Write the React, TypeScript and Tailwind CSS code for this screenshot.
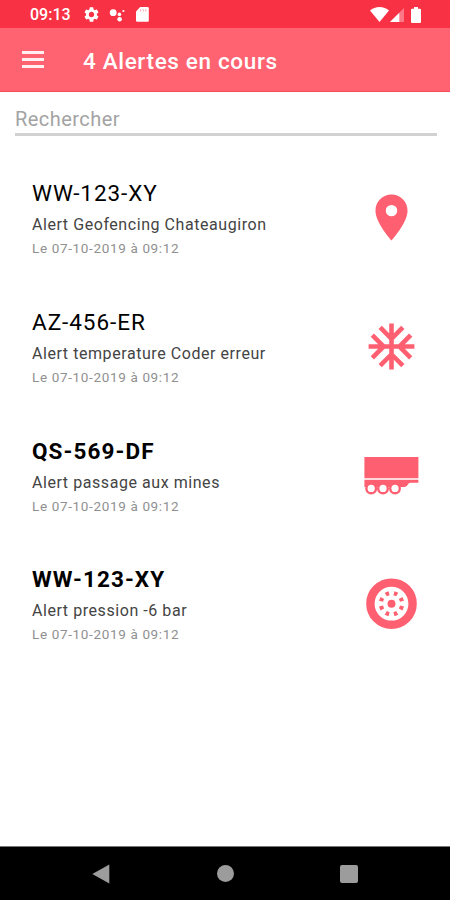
import React from 'react';

interface Alert {
  plate: string;
  message: string;
  date: string;
  unread: boolean;
  icon: React.ReactNode;
}

const PinIcon = () => (
  <svg viewBox="0 0 24 24" className="w-[55px] h-[55px]" fill="currentColor">
    <path d="M12 2C8.13 2 5 5.13 5 9c0 5.25 7 13 7 13s7-7.75 7-13c0-3.87-3.13-7-7-7zm0 9.5a2.5 2.5 0 0 1 0-5 2.5 2.5 0 0 1 0 5z" />
  </svg>
);

const SnowIcon = () => (
  <svg viewBox="0 0 24 24" className="w-[55px] h-[55px]" fill="currentColor">
    <path d="M22 11h-4.17l3.24-3.24-1.41-1.42L15 11h-2V9l4.66-4.66-1.42-1.41L13 6.17V2h-2v4.17L7.76 2.93 6.34 4.34 11 9v2H9L4.34 6.34 2.93 7.76 6.17 11H2v2h4.17l-3.24 3.24 1.41 1.42L9 13h2v2l-4.66 4.66 1.42 1.41L11 17.83V22h2v-4.17l3.24 3.24 1.42-1.41L13 15v-2h2l4.66 4.66 1.41-1.42L17.83 13H22z" />
  </svg>
);

const TrailerIcon = () => (
  <svg viewBox="0 0 55 55" className="w-[55px] h-[55px]" fill="currentColor">
    <path d="M0.4 10h54v21.3h-54z" />
    <path d="M0.4 32.8h54v3h-8.4c-1.6 0-2 3.4-5.2 4.2h-3H0.4z" />
    {[7.2, 19, 31].map((cx) => (
      <g key={cx}>
        <circle cx={cx} cy="41.4" r="6" />
        <circle cx={cx} cy="41.4" r="3.6" fill="#fff" />
      </g>
    ))}
  </svg>
);

const WheelIcon = () => (
  <svg viewBox="0 0 55 55" className="w-[55px] h-[55px]" fill="currentColor">
    <circle cx="27.5" cy="27.7" r="21.1" fill="none" stroke="currentColor" strokeWidth="8.4" />
    <circle cx="27.5" cy="27.7" r="4" />
    {[22.5, 67.5, 112.5, 157.5, 202.5, 247.5, 292.5, 337.5].map((angle) => (
      <path key={angle} d="M25.4 15l4.2 0l-0.6 4.1l-3 0z" transform={`rotate(${angle} 27.5 27.7)`} />
    ))}
  </svg>
);

const alerts: Alert[] = [
  { plate: 'WW-123-XY', message: 'Alert Geofencing Chateaugiron', date: 'Le 07-10-2019 à 09:12', unread: false, icon: <PinIcon /> },
  { plate: 'AZ-456-ER', message: 'Alert temperature Coder erreur', date: 'Le 07-10-2019 à 09:12', unread: false, icon: <SnowIcon /> },
  { plate: 'QS-569-DF', message: 'Alert passage aux mines', date: 'Le 07-10-2019 à 09:12', unread: true, icon: <TrailerIcon /> },
  { plate: 'WW-123-XY', message: 'Alert pression -6 bar', date: 'Le 07-10-2019 à 09:12', unread: true, icon: <WheelIcon /> },
];

const StatusBar = () => (
  <div className="h-7 shrink-0 bg-[#f93145] text-white flex items-center justify-between pl-[30px] pr-[29px] pt-px">
    <div className="flex items-center">
      <span className="w-[54px] text-[16px] leading-5 font-medium">09:13</span>
      <svg viewBox="2 2 20 20" className="w-[15px] h-[15px]" fill="currentColor">
        <path d="M19.14 12.94c.04-.3.06-.61.06-.94 0-.32-.02-.64-.07-.94l2.03-1.58a.49.49 0 0 0 .12-.61l-1.92-3.32a.488.488 0 0 0-.59-.22l-2.39.96c-.5-.38-1.03-.7-1.62-.94l-.36-2.54a.484.484 0 0 0-.48-.41h-3.84c-.24 0-.43.17-.47.41l-.36 2.54c-.59.24-1.13.57-1.62.94l-2.39-.96c-.22-.08-.47 0-.59.22L2.74 8.87c-.12.21-.08.47.12.61l2.03 1.58c-.05.3-.09.63-.09.94s.02.64.07.94l-2.03 1.58a.49.49 0 0 0-.12.61l1.92 3.32c.12.22.37.29.59.22l2.39-.96c.5.38 1.03.7 1.62.94l.36 2.54c.05.24.24.41.48.41h3.84c.24 0 .44-.17.47-.41l.36-2.54c.59-.24 1.13-.56 1.62-.94l2.39.96c.22.08.47 0 .59-.22l1.92-3.32a.49.49 0 0 0-.12-.61l-2.01-1.58zM12 15.6A3.61 3.61 0 0 1 8.4 12c0-1.98 1.62-3.6 3.6-3.6s3.6 1.62 3.6 3.6-1.62 3.6-3.6 3.6z" />
      </svg>
      <svg viewBox="0 0 16 14" className="w-4 h-3.5 ml-2.5" fill="currentColor">
        <circle cx="4.2" cy="4.7" r="3.4" />
        <circle cx="10.4" cy="6.4" r="1.8" />
        <circle cx="10.6" cy="11.2" r="2.3" />
        <circle cx="14.4" cy="3" r="1.1" />
      </svg>
      <svg viewBox="0 0 13 15" className="w-[13px] h-[15px] ml-[11px]" fill="currentColor">
        <path d="M4.2 0h7.3A1.3 1.3 0 0 1 12.8 1.3v12.2a1.3 1.3 0 0 1-1.3 1.3H1.3A1.3 1.3 0 0 1 0 13.5V4.5z" />
        <path d="M4.6 2v2.6M7.2 2v2.6M9.8 2v2.6" stroke="#f93145" strokeWidth="1" opacity=".4" />
      </svg>
    </div>
    <div className="flex items-center">
      <svg viewBox="0 0 19 15" className="w-[19px] h-[15px]" fill="currentColor">
        <path d="M9.5 15L0 3.4C2.5 1.3 5.8 0 9.5 0S16.5 1.3 19 3.4z" />
      </svg>
      <svg viewBox="0 0 14 14" className="w-3.5 h-3.5 ml-[1.5px]" fill="currentColor">
        <path d="M14 0v14H0z" opacity=".35" />
        <path d="M9.3 4.7V14H0z" />
      </svg>
      <svg viewBox="0 0 10 16" className="w-2.5 h-4 ml-[7px]" fill="currentColor">
        <path d="M3 0h4v1.8h2a1 1 0 0 1 1 1V15a1 1 0 0 1-1 1H1a1 1 0 0 1-1-1V2.8a1 1 0 0 1 1-1h2z" />
      </svg>
    </div>
  </div>
);

const Toolbar = () => (
  <header className="h-16 shrink-0 bg-[#ff6270] border-b border-[#f64c5c] flex items-center pl-[22px] text-white">
    <button aria-label="Menu" className="w-[61px] flex flex-col gap-1">
      <span className="block w-[22px] h-[3px] bg-white/90" />
      <span className="block w-[22px] h-[3px] bg-white/90" />
      <span className="block w-[22px] h-[3px] bg-white/90" />
    </button>
    <h1 className="text-[22.5px] leading-7 font-medium tracking-[0.65px] pt-0.5">4 Alertes en cours</h1>
  </header>
);

const AlertRow: React.FC<{ alert: Alert }> = ({ alert }) => (
  <li className="h-[128.7px] flex items-center justify-between pl-8 pr-[31px]">
    <div className="pt-0.5">
      <div className={`text-[22.5px] leading-[30px] text-black ${alert.unread ? 'font-bold tracking-[1.1px]' : 'font-normal tracking-[0.95px]'}`}>
        {alert.plate}
      </div>
      <div className="mt-[5px] text-[16px] leading-6 tracking-[0.56px] text-[#444]">{alert.message}</div>
      <div className="mt-px text-[13.5px] leading-5 tracking-[0.65px] text-[#909090]">{alert.date}</div>
    </div>
    <div className="text-[#ff6071]">{alert.icon}</div>
  </li>
);

const NavBar = () => (
  <nav className="h-[54px] shrink-0 bg-black border-t border-[#777] flex items-center justify-between pl-[92px] pr-[92px] text-[#9c9c9c]">
    <svg viewBox="0 0 18 20" className="w-[18px] h-5" fill="currentColor">
      <path d="M17.3 0.5v19L0.3 10z" />
    </svg>
    <span className="w-[17px] h-[17px] rounded-full bg-[#9c9c9c]" />
    <span className="w-[18px] h-[18px] rounded-[2px] bg-[#9c9c9c]" />
  </nav>
);

export default function App() {
  return (
    <div className="w-[450px] h-[900px] flex flex-col bg-white font-['Roboto',sans-serif] overflow-hidden">
      <StatusBar />
      <Toolbar />
      <main className="flex-1">
        <div className="ml-[15px] mr-[13px] h-11 pt-[13px] border-b-[3px] border-[#d2d2d2]">
          <input
            type="text"
            placeholder="Rechercher"
            className="block w-full h-7 text-[20px] font-normal tracking-[0.45px] outline-none placeholder:text-[#a3a3a3]"
          />
        </div>
        <ul className="pt-[17px]">
          {alerts.map((alert, i) => (
            <AlertRow key={i} alert={alert} />
          ))}
        </ul>
      </main>
      <NavBar />
    </div>
  );
}
